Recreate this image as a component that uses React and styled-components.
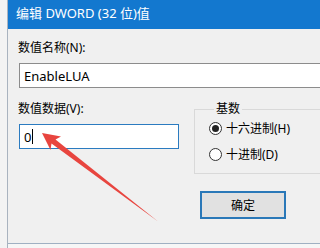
import React from 'react';
import styled, { createGlobalStyle } from 'styled-components';

const GlobalStyle = createGlobalStyle`
    html, body {
        margin: 0;
        padding: 0;
        background: #f0f0f0;
        overflow: hidden;
    }
    body {
        font-family: "Noto Sans", "Noto Sans CJK SC", sans-serif;
        font-size: 12px;
        color: #000;
    }
`;

// 바깥 화면 (대화상자가 오른쪽 밖으로 이어짐)
const Screen = styled.div`
    position: relative;
    display: flex;
    width: 100vw;
    min-width: 282px;
    height: 248px;
    overflow: hidden;
    background: #f4f4f4;
`;
const Gutter = styled.div`
    width: 7px;
    flex-shrink: 0;
    background: #f3f3f3;
    border-right: 1px solid #a9b3bf;
`;
const Window = styled.div`
    display: flex;
    flex-direction: column;
    flex: 1;
    min-width: 0;
    overflow: hidden;
`;
const TitleBar = styled.div`
    display: flex;
    align-items: center;
    height: 29px;
    flex-shrink: 0;
    padding-left: 8px;
    padding-bottom: 4px;
    box-sizing: border-box;
    background: #1378cf;
    color: #fff;
    font-size: 13px;
    white-space: nowrap;
`;
const Body = styled.div`
    display: flex;
    flex-direction: column;
    height: 215px;
    flex-shrink: 0;
    padding: 11px 0 0 11px;
    box-sizing: border-box;
    background: #f0f0f0;
    border-bottom: 1px solid #9fb0c2;
    overflow: hidden;
`;
const Label = styled.div`
    height: 16px;
    line-height: 16px;
    margin-left: -1px;
    white-space: nowrap;
`;
const TextBox = styled.div`
    display: flex;
    align-items: center;
    flex-shrink: 0;
    height: 25px;
    width: ${(p) => p.$width || '400px'};
    margin-top: 7px;
    padding-left: 4px;
    box-sizing: border-box;
    background: #fff;
    border: 1px solid ${(p) => (p.$focused ? '#2b7bc0' : '#8c8c8c')};
    font-size: 13px;
    white-space: nowrap;
`;
const Caret = styled.span`
    display: inline-block;
    width: 1px;
    height: 15px;
    margin-left: 1px;
    background: #000;
`;
const LowerRow = styled.div`
    display: flex;
    gap: 15px;
    margin-top: 13px;
`;
const LeftColumn = styled.div`
    display: flex;
    flex-direction: column;
    flex-shrink: 0;
`;
const RightColumn = styled.div`
    display: flex;
    flex-direction: column;
    width: 200px;
    flex-shrink: 0;
`;
const GroupBox = styled.fieldset`
    margin: 0;
    padding: 3px 0 11px 14px;
    width: 200px;
    min-width: 0;
    box-sizing: border-box;
    border: 1px solid #d9d9d9;
    border-right: none;
    display: flex;
    flex-direction: column;
    gap: 10px;
`;
const Legend = styled.legend`
    padding: 0 2px;
    margin-left: 5px;
    line-height: 16px;
    height: 16px;
`;
const RadioRow = styled.div`
    display: flex;
    align-items: center;
    gap: 4px;
    height: 16px;
    white-space: nowrap;
`;
const RadioCircle = styled.span`
    display: inline-flex;
    align-items: center;
    justify-content: center;
    width: 13px;
    height: 13px;
    flex-shrink: 0;
    box-sizing: border-box;
    border: 1px solid #333;
    border-radius: 50%;
    background: #fff;
    &::after {
        content: '';
        display: ${(p) => (p.$checked ? 'block' : 'none')};
        width: 7px;
        height: 7px;
        border-radius: 50%;
        background: #222;
    }
`;
const OkButton = styled.div`
    display: flex;
    align-items: center;
    justify-content: center;
    width: 86px;
    height: 28px;
    margin: 17px 0 0 6px;
    box-sizing: border-box;
    background: #e1e1e1;
    border: 2px solid #2a78b8;
    flex-shrink: 0;
`;
const BottomStrip = styled.div`
    flex: 1;
    background: #f6f6f6;
`;
// 빨간 화살표 (오버레이)
const ArrowLayer = styled.svg`
    position: absolute;
    left: 0;
    top: 0;
    pointer-events: none;
`;

function App() {
    return (
        <>
            <GlobalStyle />
            <Screen>
                <Gutter />
                <Window>
                    <TitleBar>编辑 DWORD (32 位)值</TitleBar>
                    <Body>
                        <Label>数值名称(N):</Label>
                        <TextBox>EnableLUA</TextBox>
                        <LowerRow>
                            <LeftColumn>
                                <Label>数值数据(V):</Label>
                                <TextBox $focused $width="160px">
                                    0<Caret />
                                </TextBox>
                            </LeftColumn>
                            <RightColumn>
                                <GroupBox>
                                    <Legend>基数</Legend>
                                    <RadioRow>
                                        <RadioCircle $checked />
                                        十六进制(H)
                                    </RadioRow>
                                    <RadioRow>
                                        <RadioCircle />
                                        十进制(D)
                                    </RadioRow>
                                </GroupBox>
                                <OkButton>确定</OkButton>
                            </RightColumn>
                        </LowerRow>
                    </Body>
                    <BottomStrip />
                </Window>
                <ArrowLayer width="282" height="248" viewBox="0 0 282 248">
                    <polygon
                        points="42,133 61,136.5 55.5,139.5 158,221.5 51.5,143.5 50.5,150"
                        fill="#e8453f"
                    />
                </ArrowLayer>
            </Screen>
        </>
    );
}

export default App;
